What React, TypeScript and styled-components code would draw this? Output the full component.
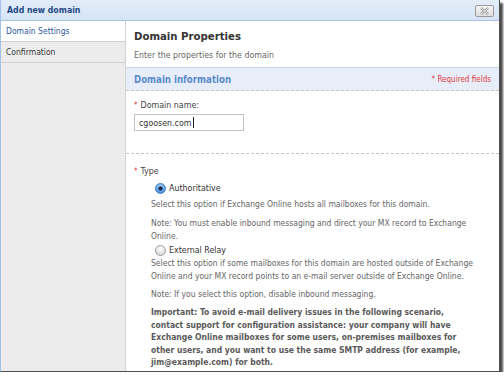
import styled, { createGlobalStyle } from "styled-components";

const Global = createGlobalStyle`
  html, body { margin: 0; padding: 0; background: #fff; }
  body { font-family: "DejaVu Sans Condensed", "DejaVu Sans", Verdana, sans-serif; }
  * { box-sizing: border-box; }
`;

const Window = styled.div`
  width: 500px;
  height: 372px;
  display: flex;
  flex-direction: column;
  border-left: 1px solid #a3c1e8;
  border-right: 1px solid #4e4e4e;
  border-bottom: 1px solid #4e4e4e;
  box-shadow: 3px 3px 2px rgba(0, 0, 0, 0.7);
  overflow: hidden;
`;

const TitleBar = styled.div`
  height: 21px;
  flex: none;
  display: flex;
  align-items: center;
  justify-content: space-between;
  padding: 0 5px 0 6px;
  background: linear-gradient(#e3edfa, #d6e4f6);
  border-bottom: 1px solid #a8c2e4;
  color: #1f4a86;
  font-weight: bold;
  font-size: 8.7px;
`;

const CloseButton = styled.div`
  width: 19px;
  height: 12px;
  margin-top: 2px;
  border: 1px solid #9a9a9a;
  border-radius: 2px;
  background: linear-gradient(#f7f7f7, #dcdcdc);
  display: flex;
  align-items: center;
  justify-content: center;
`;

const Body = styled.div`
  flex: 1;
  display: flex;
  min-height: 0;
`;

const Nav = styled.div`
  width: 125px;
  flex: none;
  background: #ececec;
  border-right: 1px solid #d2d2d2;
`;

const NavItem = styled.div<{ $active?: boolean }>`
  height: 21px;
  display: flex;
  align-items: center;
  padding-left: 5px;
  font-size: 8.5px;
  color: ${(p) => (p.$active ? "#2c5aa0" : "#3a3a3a")};
  background: ${(p) => (p.$active ? "#fff" : "#ececec")};
  border-bottom: 1px solid #cfcfcf;
`;

const Content = styled.div`
  flex: 1;
  background: #fff;
  color: #555;
`;

const Heading = styled.div`
  padding: 9px 8px 0;
  font-size: 11.3px;
  line-height: 14px;
  font-weight: bold;
  color: #333;
`;

const Subtitle = styled.div`
  padding: 6px 8px 6px;
  font-size: 8.75px;
  line-height: 11px;
  color: #666;
  border-bottom: 1px solid #c9d4e2;
`;

const SectionHeader = styled.div`
  height: 23px;
  display: flex;
  align-items: center;
  justify-content: space-between;
  padding: 0 8px;
  background: #e7eefa;
  border-bottom: 1px dashed #c4c4c4;
`;

const SectionTitle = styled.span`
  font-size: 9.6px;
  font-weight: bold;
  color: #5b8bcb;
`;

const Required = styled.span`
  font-size: 8px;
  color: #e03a3a;
`;

const Field = styled.div`
  padding: 9px 8px 22px;
  border-bottom: 1px dashed #c4c4c4;
`;

const Label = styled.div`
  font-size: 8.8px;
  line-height: 11px;
  color: #444;
  display: flex;
  align-items: center;
  gap: 3px;
`;

const Star = styled.span`
  color: #e03a3a;
  font-size: 8px;
`;

const Input = styled.div`
  margin-top: 3px;
  width: 110px;
  height: 17px;
  border: 1px solid #c2c2c2;
  display: flex;
  align-items: center;
  padding-left: 4px;
  font-size: 8.8px;
  color: #333;
`;

const Caret = styled.span`
  display: inline-block;
  width: 1px;
  height: 11px;
  background: #222;
  margin-left: 1px;
`;

const TypeBlock = styled.div`
  padding: 12px 8px 0;
`;

const Options = styled.div`
  padding: 0 11px 0 17px;
`;

const RadioRow = styled.div<{ $mt: number }>`
  display: flex;
  align-items: center;
  gap: 3px;
  height: 12px;
  margin-top: ${(p) => p.$mt}px;
  padding-left: 4px;
  font-size: 8.8px;
  color: #333;
`;

const Text = styled.p<{ $bold?: boolean; $mt: number }>`
  margin: ${(p) => p.$mt}px 0 0;
  font-size: 8.5px;
  line-height: ${(p) => (p.$bold ? "12.5px" : "13px")};
  font-weight: ${(p) => (p.$bold ? "bold" : "normal")};
  color: ${(p) => (p.$bold ? "#5a5a5a" : "#666")};
  white-space: ${(p) => (p.$bold ? "nowrap" : "normal")};
`;

function Radio({ checked }: { checked?: boolean }) {
  const id = checked ? "rg1" : "rg0";
  return (
    <svg width="11" height="11" viewBox="0 0 11 11">
      <defs>
        <radialGradient id={id} cx="50%" cy="35%" r="60%">
          <stop offset="0" stopColor={checked ? "#bfe0ff" : "#ffffff"} />
          <stop offset="1" stopColor={checked ? "#3f8de0" : "#d8d8d8"} />
        </radialGradient>
      </defs>
      <circle cx="5.5" cy="5.5" r="5" fill={`url(#${id})`} stroke={checked ? "#3571b5" : "#8a8a8a"} strokeWidth="0.8" />
      {checked && <circle cx="5.5" cy="5.5" r="2.2" fill="#1b2f55" />}
    </svg>
  );
}

export default function App() {
  return (
    <>
      <Global />
      <Window>
        <TitleBar>
          <span>Add new domain</span>
          <CloseButton>
            <svg width="11" height="8" viewBox="0 0 11 8">
              <path d="M2 1 L9 7 M9 1 L2 7" stroke="#8c8c8c" strokeWidth="2.2" />
              <path d="M2 1 L9 7 M9 1 L2 7" stroke="#f4f4f4" strokeWidth="0.9" />
            </svg>
          </CloseButton>
        </TitleBar>
        <Body>
          <Nav>
            <NavItem $active>Domain Settings</NavItem>
            <NavItem>Confirmation</NavItem>
          </Nav>
          <Content>
            <Heading>Domain Properties</Heading>
            <Subtitle>Enter the properties for the domain</Subtitle>
            <SectionHeader>
              <SectionTitle>Domain information</SectionTitle>
              <Required>* Required fields</Required>
            </SectionHeader>
            <Field>
              <Label>
                <Star>*</Star> Domain name:
              </Label>
              <Input>
                cgoosen.com<Caret />
              </Input>
            </Field>
            <TypeBlock>
              <Label>
                <Star>*</Star> Type
              </Label>
              <Options>
                <RadioRow $mt={5}>
                  <Radio checked /> Authoritative
                </RadioRow>
                <Text $mt={4}>Select this option if Exchange Online hosts all mailboxes for this domain.</Text>
                <Text $mt={6}>Note: You must enable inbound messaging and direct your MX record to Exchange Online.</Text>
                <RadioRow $mt={1}>
                  <Radio /> External Relay
                </RadioRow>
                <Text $mt={1}>
                  Select this option if some mailboxes for this domain are hosted outside of Exchange Online and your MX
                  record points to an e-mail server outside of Exchange Online.
                </Text>
                <Text $mt={5}>Note: If you select this option, disable inbound messaging.</Text>
                <Text $bold $mt={5}>
                  Important: To avoid e-mail delivery issues in the following scenario,
                  <br />
                  contact support for configuration assistance: your company will have
                  <br />
                  Exchange Online mailboxes for some users, on-premises mailboxes for
                  <br />
                  other users, and you want to use the same SMTP address (for example,
                  <br />
                  jim@example.com) for both.
                </Text>
              </Options>
            </TypeBlock>
          </Content>
        </Body>
      </Window>
    </>
  );
}
